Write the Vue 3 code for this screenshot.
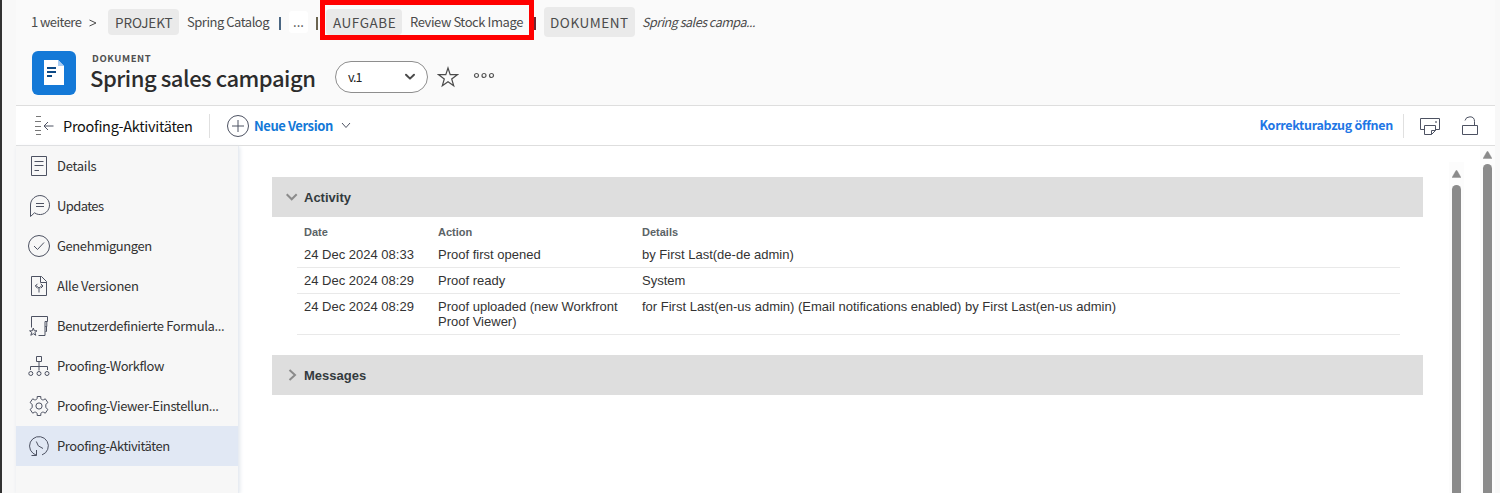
<script setup>
const nav = [
  { icon: 'details', label: 'Details', cls: 'n1' },
  { icon: 'updates', label: 'Updates', cls: 'n3' },
  { icon: 'approvals', label: 'Genehmigungen', cls: '' },
  { icon: 'versions', label: 'Alle Versionen', cls: 'n1' },
  { icon: 'forms', label: 'Benutzerdefinierte Formula...', cls: 'n2' },
  { icon: 'workflow', label: 'Proofing-Workflow', cls: '' },
  { icon: 'settings', label: 'Proofing-Viewer-Einstellun...', cls: 'n2' },
  { icon: 'history', label: 'Proofing-Aktivitäten', cls: 'n4', active: true }
]
const rows = [
  ['24 Dec 2024 08:33', 'Proof first opened', 'by First Last(de-de admin)'],
  ['24 Dec 2024 08:29', 'Proof ready', 'System'],
  ['24 Dec 2024 08:29', 'Proof uploaded (new Workfront Proof Viewer)', 'for First Last(en-us admin) (Email notifications enabled) by First Last(en-us admin)']
]
</script>

<template>
  <div class="app">
    <div class="edge"></div>
    <div class="gutter"></div>
    <div class="page">
      <header class="head">
        <nav class="crumbs">
          <span class="more">1 weitere</span>
          <svg class="gt" width="8" height="8" viewBox="0 0 8 8"><path d="M.5 1 L7 4 L.5 7" /></svg>
          <span class="chip projekt">PROJEKT</span>
          <span class="catalog">Spring Catalog</span>
          <span class="bar first"></span>
          <span class="dots">...</span>
          <span class="bar second"></span>
          <span class="task">
            <span class="chip">AUFGABE</span>
            <span class="review">Review Stock Image</span>
          </span>
          <span class="bar third"></span>
          <span class="chip tall">DOKUMENT</span>
          <span class="current">Spring sales campa...</span>
        </nav>
        <div class="title-row">
          <div class="doc-icon">
            <svg width="20" height="25" viewBox="0 0 20 25">
              <path d="M0 0H14L20 6V25H0z" fill="#fff" />
              <path d="M14 0L20 6H14z" fill="#a9cdf3" />
              <path d="M3 8H12M3 12H12M3 16H8" stroke="#0d4a86" stroke-width="2" />
            </svg>
          </div>
          <div class="names">
            <span class="kind">DOKUMENT</span>
            <h1>Spring sales campaign</h1>
          </div>
          <div class="select">
            <span>v.1</span>
            <svg width="12" height="8" viewBox="0 0 12 8"><path d="M2 1.700L6 5.600L10 1.700" fill="none" stroke="#4b4b4b" stroke-width="2" stroke-linecap="round" stroke-linejoin="round" /></svg>
          </div>
          <svg class="star" width="22" height="22" viewBox="0 0 22 22"><path d="M11 2L13.200 8.700L20.300 8.700L14.700 13L16.700 19.800L11 15.800L5.300 19.800L7.300 13L1.700 8.700L8.800 8.700z" /></svg>
          <svg class="ellipsis" width="22" height="7" viewBox="0 0 22 7"><circle cx="3.500" cy="3.500" r="2" /><circle cx="11" cy="3.500" r="2" /><circle cx="18.500" cy="3.500" r="2" /></svg>
        </div>
      </header>

      <div class="toolbar">
        <svg class="ln collapse" width="20" height="20" viewBox="0 0 20 20"><path d="M1 .5H6M0 5.500H6M0 10.500H6M0 14.500H6M1 18.500H6" stroke="#777" /><path d="M18.500 10H9.500M13 6L9 10L13 14" /></svg>
        <span class="section">Proofing-Aktivitäten</span>
        <i class="sep"></i>
        <svg class="ln plus" width="24" height="24" viewBox="0 0 24 24"><circle cx="12" cy="12" r="10.500" /><path d="M12 6V18M6 12H18" /></svg>
        <span class="new">Neue Version</span>
        <svg class="ln" width="10" height="7" viewBox="0 0 10 7"><path d="M1 1L5 5.500L9 1" /></svg>
        <span class="open">Korrekturabzug öffnen</span>
        <i class="sep right"></i>
        <svg class="ln print" width="20" height="18" viewBox="0 0 20 18"><path d="M4.500 11.500H.5V.5H19.500V11.500H15.500M4.500 7.500H15.500V12.500L11.500 16.500H4.500zM11.500 16.500V12.500H15.500" /><circle cx="16" cy="4" r=".5" /></svg>
        <svg class="ln" width="18" height="20" viewBox="0 0 18 20"><path d="M1.500 9.500H16.500V18.500H1.500zM13.500 9.500V5.500Q13.500 .8 9 .8Q4.800 .8 4 4.500" /></svg>
      </div>

      <div class="body">
        <aside>
          <div v-for="n in nav" :key="n.icon" class="item" :class="{ active: n.active }">
            <svg class="ln" width="24" height="24" viewBox="0 0 24 24">
              <path v-if="n.icon === 'details'" d="M4.500 2.500H19.500V21.500H4.500zM7.500 7.500H16.500M7.500 11.500H16.500M7.500 16.500H12" />
              <path v-else-if="n.icon === 'updates'" d="M3.500 22.500V11A9.500 9.500 0 1 1 7.500 18.800zM9 9.500H17M9 12.500H17" />
              <template v-else-if="n.icon === 'approvals'"><circle cx="12" cy="12" r="10.500" /><path d="M7 12L10.500 15.500L17 8.500" /></template>
              <template v-else-if="n.icon === 'versions'"><path d="M4.500 2.500H14.500L19.500 7.500V21.500H4.500zM13.500 2.500V8.500H19.500" /><path d="M12 18.500V14L9.500 12H8.500M12 14L14.500 12H16M10.500 9.800L8.300 12L10.500 14.200M13.800 9.800L16 12L13.800 14.200" /></template>
              <template v-else-if="n.icon === 'forms'"><path d="M4.500 13.500V2.500H20.500V7.500H18V21.500H11.500M18.500 7.500H19.800V12.500H18.500M18.500 12.500H19.500V17.500H18.500" /><path d="M6.300 14L7.300 16.800H10L7.900 18.500L8.800 21.300L6.300 19.700L3.800 21.300L4.700 18.500L2.600 16.800H5.300z" /></template>
              <template v-else-if="n.icon === 'workflow'"><path d="M9.500 2.500H14.500V7.500H9.500zM12 7.500V16.500M3.500 16V12.500H20.500V16" /><circle cx="3.800" cy="19.500" r="2" /><circle cx="12" cy="19.500" r="2" /><circle cx="20" cy="19.500" r="2" /></template>
              <template v-else-if="n.icon === 'settings'"><circle cx="12" cy="12" r="3.100" /><path d="M10.200 2.500H13.800V4.300Q13.800 5 14.600 5.400Q15.800 6.200 16.500 5.800L18.300 4.800L20.900 8.600L19.300 9.800Q18.600 10.400 18.800 12Q18.600 13.600 19.300 14.200L20.900 15.400L18.300 19.200L16.500 18.200Q15.800 17.800 14.600 18.600Q13.800 19 13.800 19.700V21.500H10.200V19.700Q10.200 19 9.400 18.600Q8.200 17.800 7.500 18.200L5.700 19.200L3.100 15.400L4.700 14.200Q5.400 13.600 5.200 12Q5.400 10.400 4.700 9.800L3.100 8.600L5.700 4.800L7.500 5.800Q8.200 6.200 9.400 5.400Q10.200 5 10.200 4.300z" stroke-linejoin="round" /></template>
              <path v-else d="M15 20.900A9.400 9.400 0 1 0 6 19.300L9.300 21.200M9.500 16V21.500H4.500M9.300 7.500L11.300 11.800L16 14.500" />
            </svg>
            <span :class="n.cls">{{ n.label }}</span>
          </div>
        </aside>
        <main>
          <section class="panel">
            <h2><svg width="12" height="8" viewBox="0 0 12 8"><path d="M.7 1.200L5.700 6.300L10.700 1.200" /></svg><span>Activity</span></h2>
            <div class="table">
              <div class="row th"><span>Date</span><span>Action</span><span>Details</span></div>
              <div v-for="(r, i) in rows" :key="i" class="row"><span v-for="c in r" :key="c">{{ c }}</span></div>
            </div>
          </section>
          <section class="panel">
            <h2><svg width="12" height="12" viewBox="0 0 12 12"><path d="M3.500 1L9 6L3.500 11" /></svg><span>Messages</span></h2>
          </section>
        </main>
        <div class="scroll inner"><svg width="9" height="8" viewBox="0 0 9 8"><path d="M0 7.500L4 .5H5L9 7.500z" /></svg><i></i></div>
        <div class="scroll outer"><svg width="9" height="8" viewBox="0 0 9 8"><path d="M0 7.500L4 .5H5L9 7.500z" /></svg><i></i></div>
      </div>
    </div>
    <div class="strip"></div>
  </div>
</template>

<style>
body { margin: 0; background: #fafafa; }
</style>

<style scoped>
* { box-sizing: border-box; }
.app { display: flex; width: 1500px; height: 493px; overflow: hidden; white-space: nowrap; font: 13px/20px "Noto Sans CJK SC", "Open Sans", sans-serif; color: #323232; background: #fafafa; }
svg { display: block; flex: none; }
.edge { width: 2px; background: #323232; }
.gutter { width: 14px; background: #f8f8f8; }
.page { width: 1479px; display: flex; flex-direction: column; }
.strip { width: 5px; background: #f8f8f8; }
.head { height: 105px; }
.crumbs { display: flex; align-items: center; height: 44px; padding-left: 15px; color: #4b4b4b; }
.crumbs > * { flex: none; }
.more { width: 58px; letter-spacing: -.55px; }
.gt { margin-top: 2px; fill: none; stroke: #4b4b4b; }
.chip { height: 26px; line-height: 26px; border-radius: 4px; background: #eaeaea; padding-left: 7px; width: 76px; font-size: 13.500px; letter-spacing: .55px; }
.projekt { width: 71px; margin-left: 11px; letter-spacing: -.1px; }
.catalog { width: 92px; margin-left: 8px; letter-spacing: -.48px; }
.bar { width: 2px; height: 13px; margin-top: 2px; background: #4a6682; }
.second { background: #6b6450; }
.dots { width: 19px; height: 22px; margin: 0 8px 0 8px; background: #fff; border-radius: 3px; text-align: center; line-height: 22px; }
.task { display: flex; align-items: center; width: 214px; height: 40px; margin: -4px 0 0 2px; border: 5px solid #f00; padding-left: 1px; padding-top: 4px; background: #fafafa; }
.review { margin-left: 8px; letter-spacing: -.42px; }
.third { background: #6b2630; }
.tall { width: 91px; height: 30px; line-height: 30px; margin-left: 8px; padding-left: 6px; }
.current { margin-left: 7px; font-style: italic; font-size: 12.500px; letter-spacing: -.47px; }
.title-row { display: flex; align-items: flex-start; padding: 7px 0 0 16px; }
.doc-icon { width: 44px; height: 44px; border-radius: 6px; background: #1479d7; display: flex; padding: 9px 0 0 12px; }
.names { width: 244px; margin-left: 15px; }
.kind { display: block; height: 14px; margin-left: 1px; font-size: 9.500px; line-height: 14px; font-weight: 700; letter-spacing: .6px; color: #505050; }
h1 { margin: 0 0 0 -1px; font-size: 22px; line-height: 25px; font-weight: 500; letter-spacing: -.46px; color: #2c2c2c; }
.select { display: flex; align-items: center; justify-content: space-between; width: 93px; height: 32px; margin-top: 10px; padding: 0 11px 0 12px; border: 1px solid #8e8e8e; border-radius: 16px; background: #fff; color: #222; font-size: 12.500px; letter-spacing: -1px; }
.star { margin: 15px 0 0 9px; fill: none; stroke: #4b4b4b; stroke-width: 1.2; }
.ellipsis { margin: 21px 0 0 14px; fill: none; stroke: #555; stroke-width: 1.2; }
.toolbar { display: flex; align-items: center; height: 41px; padding: 0 16px 0 19px; background: #fff; border-top: 1px solid #dedede; border-bottom: 1px solid #dedede; }
.ln { fill: none; stroke: #4d5262; stroke-width: 1; }
.section { width: 146px; margin-left: 8px; font-size: 14.500px; letter-spacing: -.3px; color: #111; }
.sep { width: 1px; height: 24px; background: #e0e0e0; }
.plus { margin-left: 16px; }
.new { width: 87px; margin-left: 4px; font-weight: 700; letter-spacing: -.42px; color: #1479d7; }
.open { margin-left: auto; margin-top: -2px; font-size: 12.500px; font-weight: 700; letter-spacing: -.3px; color: #2176e5; }
.right { margin-left: 10px; }
.print { margin: 2px 21px 0 16px; }
.body { display: flex; height: 347px; background: #fff; }
aside { position: relative; width: 223px; background: #f7f7f7; border-right: 1px solid #e8ecf2; box-shadow: 1px 1px 4px #e1e6ec; }
.item { display: flex; align-items: center; height: 40px; padding-left: 11px; }
.item span { margin-left: 6px; letter-spacing: -.41px; }
.item .n1 { letter-spacing: -.27px; }
.item .n2 { letter-spacing: -.37px; }
.item .n3 { letter-spacing: -.6px; }
.item .n4 { letter-spacing: -.44px; }
.active { background: #e1e8f4; }
main { width: 1151px; margin: 31px 0 0 33px; font-family: "Liberation Sans", Arial, sans-serif; color: #333; }
h2 { display: flex; align-items: center; gap: 6px; height: 40px; margin: 0; padding-left: 14px; font-size: 13px; line-height: 16px; font-weight: 700; color: #333a3d; background: #dedede; }
h2 span { padding-top: 2px; }
h2 svg { fill: none; stroke: #8b8b8b; stroke-width: 2; }
.table { width: 1103px; height: 138px; margin-left: 25px; padding-top: 7px; }
.row { display: grid; grid-template-columns: 134px 204px 1fr; padding: 5px 0 5px 7px; line-height: 15px; border-bottom: 1px solid #e9e9e9; white-space: normal; }
.row span { padding-right: 10px; }
.th { height: 18px; padding-top: 0; padding-bottom: 0; border: 0; font-size: 11px; line-height: 17px; font-weight: 700; color: #5b6366; }
.scroll { width: 15px; display: flex; flex-direction: column; align-items: center; background: #fcfcfc; }
.scroll path { fill: #8b8b8b; stroke: #8b8b8b; stroke-width: .4; }
.scroll i { width: 9px; flex: 1; border-radius: 5px 5px 0 0; background: #8b8b8b; }
.inner { margin: 16px 0 0 26px; padding-top: 8px; }
.inner i { margin-top: 7px; }
.outer { margin-left: 16px; padding-top: 5px; }
.outer i { margin-top: 5px; }
</style>
